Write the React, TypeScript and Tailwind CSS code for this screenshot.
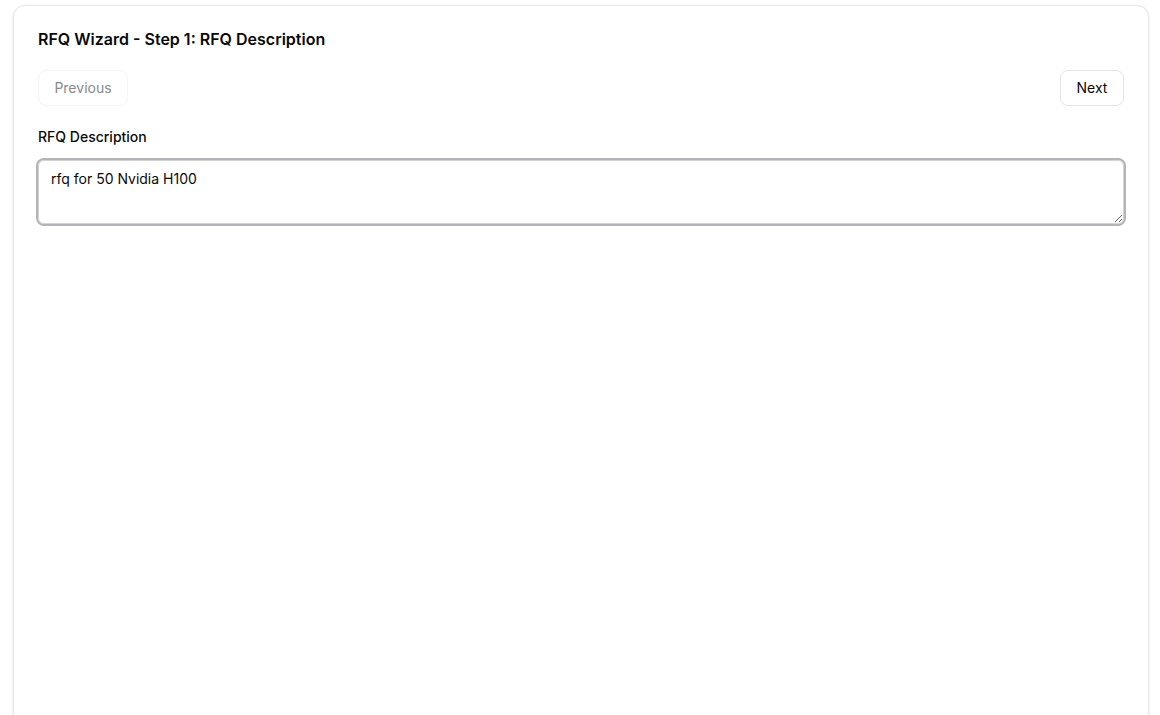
export default function App() {
    return (
        <div className="min-h-[715px] bg-white pl-[13px] pr-[11px] pt-[5px]" style={{ fontFamily: "Inter, 'Noto Sans', sans-serif" }}>
            <div className="min-h-[720px] rounded-xl border border-gray-200 bg-white px-6 pt-6 shadow-sm">
                <h2 className="text-base font-semibold leading-[18px] text-neutral-950">RFQ Wizard - Step 1: RFQ Description</h2>
                <div className="mt-[22px] flex items-center justify-between">
                    <button disabled className="h-9 w-[90px] rounded-lg border border-neutral-100 bg-white text-sm font-normal text-[#8a8a8a]">Previous</button>
                    <button className="h-9 w-16 rounded-lg border border-neutral-200 bg-white text-sm font-normal text-neutral-950">Next</button>
                </div>
                <label htmlFor="rfq-desc" className="mt-[21px] block text-sm font-medium leading-5 text-neutral-950">RFQ Description</label>
                <textarea
                    id="rfq-desc"
                    defaultValue="rfq for 50 Nvidia H100"
                    className="mt-[13px] block h-16 w-full resize-y rounded-md border border-neutral-300 px-3 py-2 text-sm leading-5 text-neutral-950 outline-none ring-2 ring-[#b4b4b8]"
                />
            </div>
        </div>
    )
}
